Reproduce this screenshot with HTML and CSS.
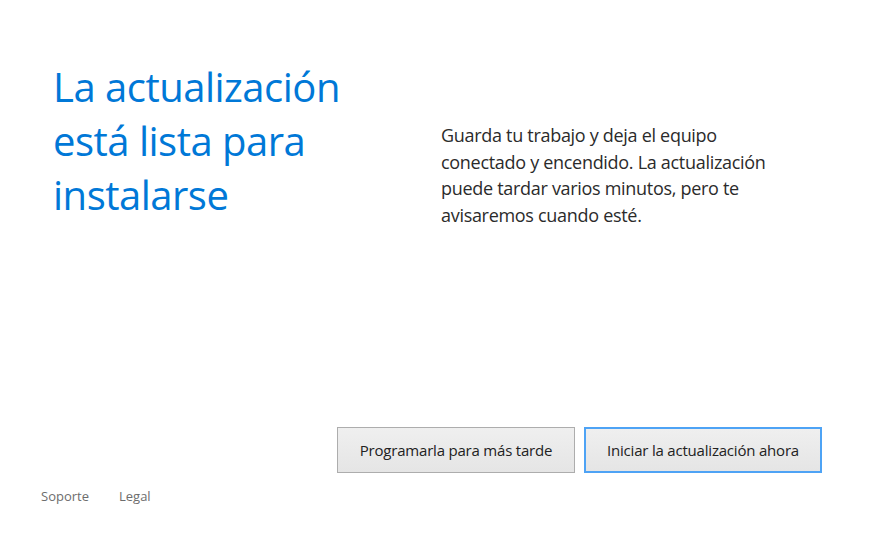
FILE: index.html
```html
<!DOCTYPE html>
<html lang="es">

<head>
  <meta charset="UTF-8">
  <title>Windows Update</title>
  <meta name="viewport" content="width=device-width, initial-scale=1.0">
  <link rel="stylesheet" href="styles.css">
</head>

<body>
  <div class="page">
    <div class="top">
      <h1 class="title">La actualización está lista para instalarse</h1>
      <p class="desc">Guarda tu trabajo y deja el equipo conectado y encendido. La actualización puede tardar varios minutos, pero te avisaremos cuando esté.</p>
    </div>

    <div class="actions">
      <button class="btn">Programarla para más tarde</button>
      <button class="btn primary">Iniciar la actualización ahora</button>
    </div>

    <ul class="footer">
      <li><a href="#">Soporte</a></li>
      <li><a href="#">Legal</a></li>
    </ul>
  </div>
</body>

</html>
```

FILE: styles.css
```css
* {
  margin: 0;
  padding: 0;
  box-sizing: border-box;
}

body {
  width: 100%;
  height: 100vh;
  overflow: hidden;
  background: #fff;
  font-family: "Open Sans", "Noto Sans", sans-serif;
}

.page {
  display: flex;
  flex-direction: column;
  height: 100%;
}

.top {
  display: flex;
  padding: 60px 0 0 53px;
}

.title {
  width: 388px;
  padding-right: 50px;
  font-size: 40px;
  font-weight: normal;
  line-height: 54px;
  color: #0078d7;
  letter-spacing: -0.5px;
}

.desc {
  width: 350px;
  margin-top: 62px;
  font-size: 18px;
  line-height: 26.7px;
  color: #2b2b2b;
  letter-spacing: -0.3px;
}

.actions {
  display: flex;
  justify-content: flex-end;
  gap: 9px;
  margin-top: auto;
  padding-right: 56px;
}

.btn {
  width: 238px;
  height: 46px;
  font-family: inherit;
  font-size: 15px;
  letter-spacing: -0.2px;
  color: #222;
  background: linear-gradient(#efefef, #e5e5e5);
  border: 1px solid #adadad;
}

.btn.primary {
  border: 2px solid #4ea3f5;
}

.footer {
  display: flex;
  gap: 30px;
  list-style: none;
  padding: 11px 0 33px 41px;
}

.footer a {
  font-size: 13px;
  color: #6d6d6d;
  text-decoration: none;
}
```
